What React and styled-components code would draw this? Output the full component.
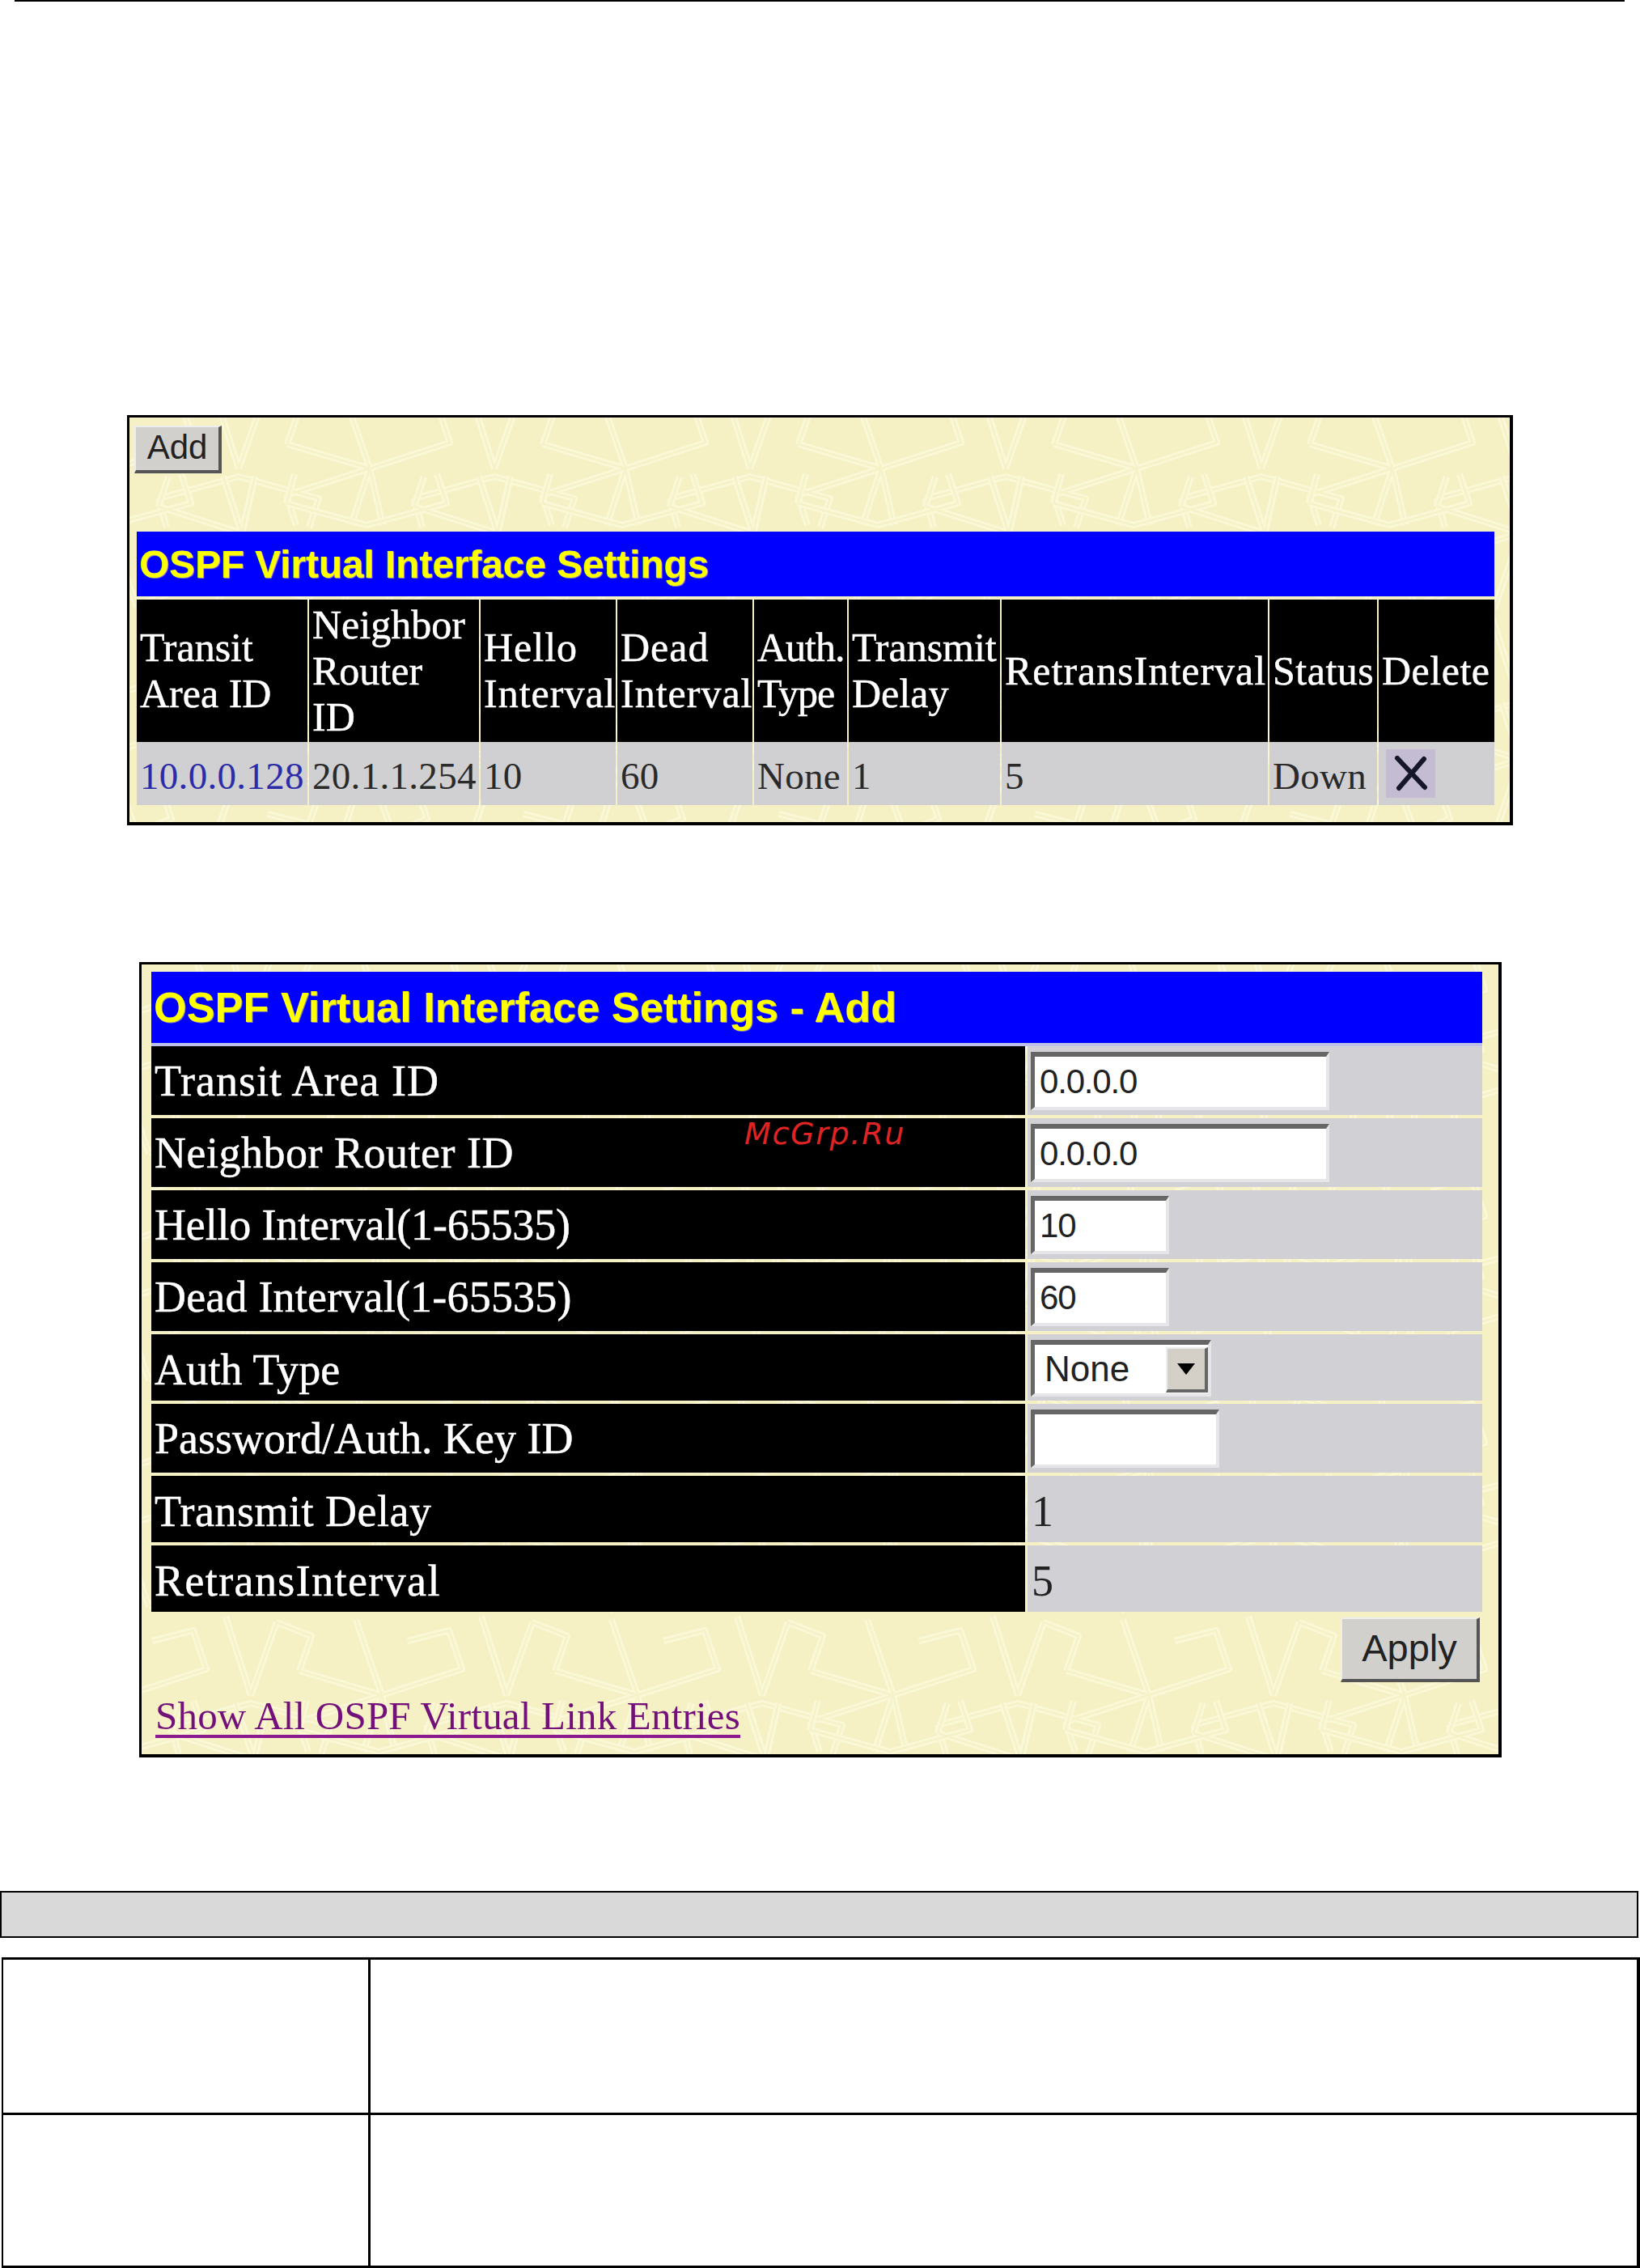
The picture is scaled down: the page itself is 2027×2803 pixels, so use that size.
import React from "react";
import styled, { createGlobalStyle } from "styled-components";

const motif =
  "M0 100 L99 68 L83 20 L32 33 M213 133 L316 100 M213 133 L225 170 M55 137 L154 110 L253 137 L241 173 M55 137 L65 173 M154 100 L123 3 M154 100 L186 10 M214 70 L229 27 L186 10 M214 70 L316 100 M0 100 L-32 7 M0 100 L16 170 M0 100 L-23 170 M316 100 L415 68 M316 100 L284 7 M316 100 L332 170 M316 100 L293 170";
const band = (stroke, width) =>
  `<path d="${motif}" stroke="${stroke}" stroke-width="${width}"/>`;
const layer = band("#fbf8d8", 8) + band("#f6f2c8", 2.5);
const tile = `<svg xmlns="http://www.w3.org/2000/svg" width="316" height="280" viewBox="0 0 316 280"><g fill="none" stroke-linejoin="round"><g>${layer}</g><g transform="translate(158 280) scale(1 -1)">${layer}</g><g transform="translate(-158 280) scale(1 -1)">${layer}</g></g></svg>`;
const tileUrl = `url("data:image/svg+xml,${encodeURIComponent(tile)}")`;

const Global = createGlobalStyle`
  html, body { margin: 0; padding: 0; background: #fff; }
`;

const Page = styled.div`
  position: relative;
  width: 2027px;
  height: 2803px;
  overflow: hidden;
  background: #fff;
  font-family: "Liberation Serif", "Times New Roman", serif;
`;

const TopRule = styled.div`
  height: 2px;
  margin: 0 19px 0 18px;
  background: #000;
`;

const Panel = styled.section`
  box-sizing: border-box;
  display: flex;
  flex-direction: column;
  width: ${(p) => p.$w}px;
  height: ${(p) => p.$h}px;
  margin: ${(p) => p.$top}px 0 0 ${(p) => p.$left}px;
  padding: ${(p) => p.$pad};
  border: solid #000;
  border-width: 3px 4px 4px 3px;
  background-color: #f5f1c4;
  background-image: ${tileUrl};
  background-position: 297px -37px;
`;

const WinButton = styled.button`
  box-sizing: border-box;
  flex: none;
  width: ${(p) => p.$w}px;
  height: ${(p) => p.$h}px;
  padding: 0 0 4px;
  border: solid;
  border-width: 2px 4px 4px 2px;
  border-color: #eeeeee #555555 #555555 #eeeeee;
  background: #d2d0cd;
  color: #222;
  font-family: "Liberation Sans", Arial, sans-serif;
  font-size: ${(p) => p.$size}px;
`;

const AddButton = styled(WinButton)`
  margin: 0 0 72px -3px;
`;

const ApplyButton = styled(WinButton)`
  align-self: flex-end;
  margin: 7px 3px 0 0;
`;

const Title = styled.h2`
  box-sizing: border-box;
  display: flex;
  align-items: center;
  height: ${(p) => p.$h}px;
  margin: 0;
  padding-left: 3px;
  background: #0000ff;
  color: #ffff00;
  font-family: "Liberation Sans", Arial, sans-serif;
  font-weight: 700;
  font-size: ${(p) => p.$size}px;
  text-shadow: 1px 1px 0 rgba(170, 170, 150, 0.75);
  white-space: nowrap;
  border-bottom: ${(p) => (p.$rule ? "4px solid #bfc0e8" : "0")};
`;

const EntryTable = styled.div`
  display: grid;
  grid-template-columns: 211px 210px 167px 167px 115px 187px 329px 133px 143px;
  grid-template-rows: 176px 78px;
  column-gap: 2px;
  margin-top: 4px;
`;

const HeadCell = styled.div`
  display: flex;
  align-items: center;
  padding-left: 4px;
  background: #000;
  color: #fff;
  font-size: 50px;
  line-height: 57px;
  letter-spacing: ${(p) => p.$track}px;
  -webkit-text-stroke: 0.5px #fff;
  white-space: pre-line;
`;

const DataCell = styled.div`
  display: flex;
  align-items: center;
  padding: 5px 0 0 4px;
  background: #d0d0d2;
  color: #2a2a2a;
  font-size: 47px;
  letter-spacing: 0.3px;
  white-space: nowrap;
`;

const IconCell = styled.div`
  display: flex;
  align-items: center;
  padding-left: 9px;
  background: #d0d0d2;
`;

const EntryLink = styled.a`
  color: #2c2ca8;
  text-decoration: none;
`;

const DeleteIcon = styled.span`
  display: flex;
  align-items: center;
  justify-content: center;
  width: 61px;
  height: 60px;
  background: #c3bcd3;
`;

const FormGrid = styled.div`
  display: grid;
  grid-template-columns: 1080px 562px;
  grid-template-rows: 85px 85px 85px 85px 82px 85px 82px 82px;
  gap: 4px 3px;
`;

const LabelCell = styled.div`
  display: flex;
  align-items: center;
  padding: ${(p) => (p.$nudge ? "5px" : "0")} 0 0 4px;
  background: #000;
  color: #fff;
  font-size: 54px;
  letter-spacing: ${(p) => p.$track}px;
  -webkit-text-stroke: 0.5px #fff;
  white-space: nowrap;
`;

const ValueCell = styled.div`
  display: flex;
  align-items: center;
  padding: ${(p) => (p.$nudge ? "5px" : "0")} 0 0 5px;
  background: #d1d0d4;
  color: #222;
  font-size: 54px;
`;

const TextBox = styled.input`
  box-sizing: border-box;
  width: ${(p) => p.$w}px;
  height: 72px;
  padding: 0 0 0 6px;
  margin-left: -1px;
  border: solid;
  border-width: 6px 4px 4px 5px;
  border-color: #666666 #e6e6e8 #e6e6e8 #666666;
  background: #fff;
  color: #222;
  font-family: "Liberation Sans", Arial, sans-serif;
  font-size: 42px;
  letter-spacing: -1.2px;
  outline: none;
`;

const SelectBox = styled.div`
  box-sizing: border-box;
  display: flex;
  align-items: center;
  justify-content: space-between;
  width: 223px;
  height: 70px;
  margin: -4px 0 0 -1px;
  padding-left: 12px;
  border: solid;
  border-width: 6px 4px 4px 5px;
  border-color: #666666 #e6e6e8 #e6e6e8 #666666;
  background: #fff;
  color: #222;
  font-family: "Liberation Sans", Arial, sans-serif;
  font-size: 44px;
`;

const SelectArrow = styled.span`
  box-sizing: border-box;
  display: flex;
  align-items: center;
  justify-content: center;
  width: 52px;
  height: 56px;
  margin-top: 2px;
  background: #d4d0c8;
  border: solid;
  border-width: 2px 4px 4px 2px;
  border-color: #eeeeee #666666 #666666 #eeeeee;
`;

const Footer = styled.div`
  display: flex;
  flex-direction: column;
`;

const ShowAllLink = styled.a`
  margin: 13px 0 0 5px;
  color: #74107a;
  font-size: 49px;
  line-height: 57px;
  letter-spacing: 0.2px;
  text-decoration: underline;
  text-decoration-color: #8a1a8e;
  text-decoration-thickness: 4px;
  text-underline-offset: 7px;
  white-space: nowrap;
`;

const Watermark = styled.div`
  position: absolute;
  left: 920px;
  top: 1379px;
  color: #e02424;
  font-family: "DejaVu Sans", sans-serif;
  font-style: italic;
  font-size: 38px;
  line-height: 44px;
  letter-spacing: 1.7px;
`;

const SummaryBar = styled.div`
  box-sizing: border-box;
  width: 2025px;
  height: 58px;
  margin-top: 165px;
  border: 2px solid #000;
  background: #d9d9d9;
`;

const ParamTable = styled.div`
  box-sizing: border-box;
  display: grid;
  grid-template-columns: 451px 1fr;
  grid-template-rows: 189px 186px;
  gap: 3px;
  width: 2025px;
  height: 384px;
  margin: 24px 0 0 2px;
  padding: 3px 4px 3px 2px;
  background: #000;
`;

const ParamCell = styled.div`
  background: #fff;
`;

const columns = [
  { text: "Transit\nArea ID", track: 0 },
  { text: "Neighbor\nRouter\nID", track: 0 },
  { text: "Hello\nInterval", track: 1 },
  { text: "Dead\nInterval", track: 1 },
  { text: "Auth.\nType", track: -1 },
  { text: "Transmit\nDelay", track: 0 },
  { text: "RetransInterval", track: 1 },
  { text: "Status", track: 0.5 },
  { text: "Delete", track: 0.5 },
];

const formRows = [
  { label: "Transit Area ID", track: 1, input: { value: "0.0.0.0", width: 369 } },
  { label: "Neighbor Router ID", track: 0.5, input: { value: "0.0.0.0", width: 369 } },
  { label: "Hello Interval(1-65535)", track: -0.15, input: { value: "10", width: 171 } },
  { label: "Dead Interval(1-65535)", track: 0.2, input: { value: "60", width: 171 } },
  { label: "Auth Type", track: 0.2, nudge: true, select: "None" },
  { label: "Password/Auth. Key ID", track: 0, input: { value: "", width: 233 } },
  { label: "Transmit Delay", track: 0.5, nudge: true, text: "1" },
  { label: "RetransInterval", track: 1.4, nudge: true, text: "5" },
];

export default function App() {
  return (
    <Page>
      <Global />
      <TopRule />

      <Panel $w={1713} $h={507} $top={511} $left={157} $pad="10px 19px 0 9px">
        <AddButton $w={108} $h={59} $size={42}>Add</AddButton>
        <Title $h={80} $size={47.7}>OSPF Virtual Interface Settings</Title>
        <EntryTable>
          {columns.map((c) => (
            <HeadCell key={c.text} $track={c.track}>{c.text}</HeadCell>
          ))}
          <DataCell><EntryLink href="#">10.0.0.128</EntryLink></DataCell>
          <DataCell>20.1.1.254</DataCell>
          <DataCell>10</DataCell>
          <DataCell>60</DataCell>
          <DataCell>None</DataCell>
          <DataCell>1</DataCell>
          <DataCell>5</DataCell>
          <DataCell>Down</DataCell>
          <IconCell>
            <DeleteIcon>
              <svg width="44" height="44" viewBox="0 0 44 44" fill="none">
                <path d="M5 3 L39 39 M38 4 L7 40" stroke="#16162a" strokeWidth="6" strokeLinecap="round" />
              </svg>
            </DeleteIcon>
          </IconCell>
        </EntryTable>
      </Panel>

      <Panel $w={1684} $h={983} $top={169} $left={172} $pad="9px 20px 0 12px">
        <Title $h={92} $size={52.3} $rule>OSPF Virtual Interface Settings - Add</Title>
        <FormGrid>
          {formRows.map((r) => (
            <React.Fragment key={r.label}>
              <LabelCell $track={r.track} $nudge={r.nudge}>{r.label}</LabelCell>
              <ValueCell $nudge={r.nudge}>
                {r.input && <TextBox readOnly $w={r.input.width} defaultValue={r.input.value} />}
                {r.select && (
                  <SelectBox>
                    {r.select}
                    <SelectArrow>
                      <svg width="22" height="14" viewBox="0 0 22 14">
                        <path d="M0 0 H22 L11 14 Z" fill="#000" />
                      </svg>
                    </SelectArrow>
                  </SelectBox>
                )}
                {r.text}
              </ValueCell>
            </React.Fragment>
          ))}
        </FormGrid>
        <Footer>
          <ApplyButton $w={172} $h={80} $size={47}>Apply</ApplyButton>
          <ShowAllLink href="#">Show All OSPF Virtual Link Entries</ShowAllLink>
        </Footer>
      </Panel>

      <SummaryBar />
      <ParamTable>
        <ParamCell />
        <ParamCell />
        <ParamCell />
        <ParamCell />
      </ParamTable>

      <Watermark>McGrp.Ru</Watermark>
    </Page>
  );
}
